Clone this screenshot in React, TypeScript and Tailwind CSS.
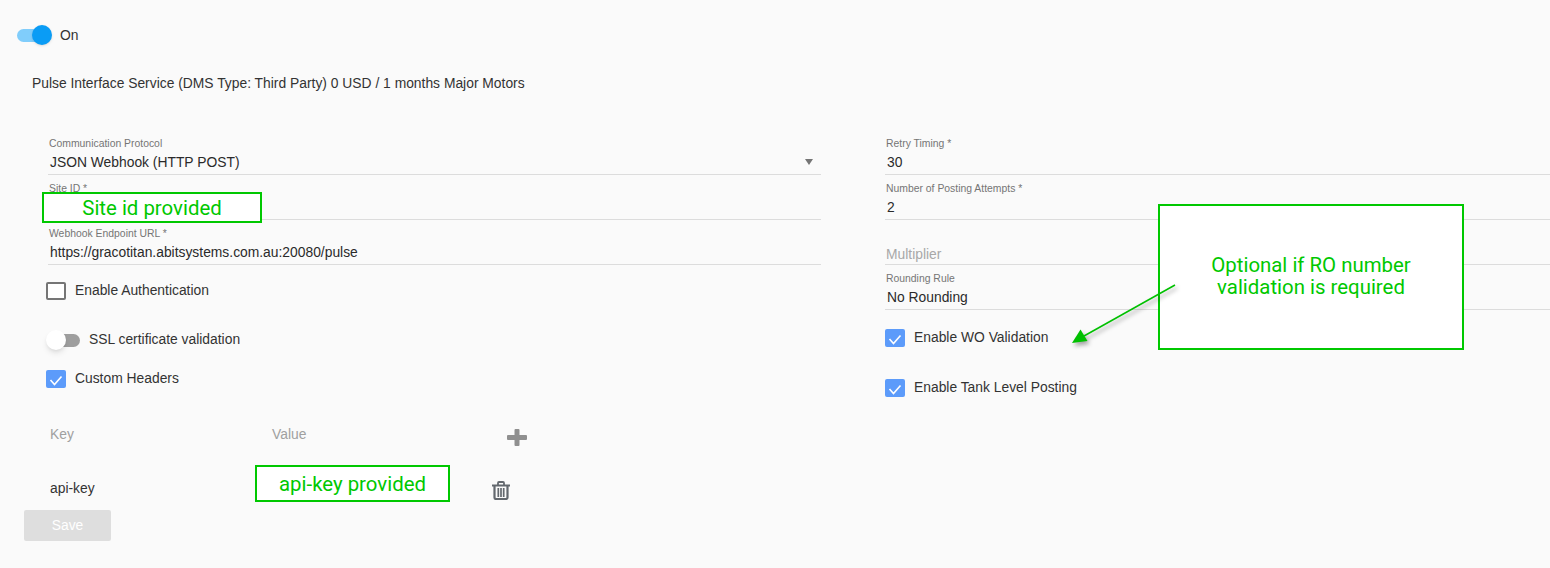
import React from 'react';

const Check: React.FC<{ className: string }> = ({ className }) => (
  <span className={`flex items-center justify-center rounded-[2px] bg-[#5c9bfa] shrink-0 ${className}`}>
    <svg viewBox="0 0 20 18" className="w-full h-full" fill="none" stroke="#ffffff" strokeWidth="1.6">
      <path d="M4.5 10 L8.5 14.5 L15.5 6.5" />
    </svg>
  </span>
);

const Field: React.FC<{ label: string; value?: string }> = ({ label, value }) => (
  <div className="h-[45px] pt-[8px] border-b border-[#dcdcdc]">
    <div className="h-[12px] text-[10.4px] leading-[12px] text-[#757575] pl-[1px]">{label}</div>
    <div className="h-[20px] mt-[2px] text-[13.85px] leading-[20px] text-[#2a2a2a] pl-[2px]">{value}</div>
  </div>
);

const Note: React.FC<{ className: string; children: React.ReactNode }> = ({ className, children }) => (
  <div className={`absolute flex items-center justify-center border-2 border-[#00c800] bg-white text-[20.4px] leading-[22px] text-[#00c800] font-['Roboto',sans-serif] text-center ${className}`}>
    {children}
  </div>
);

export default function App() {
  return (
    <div className="relative h-[568px] w-full overflow-hidden bg-[#fafafa] font-['Liberation_Sans',Arial,sans-serif] text-[13.85px] text-[#333333]">
      <div className="flex items-center h-[20px] mt-[25px] ml-[17px]">
        <div className="relative w-[35px] h-[20px] flex items-center">
          <div className="w-[32px] h-[13px] rounded-full bg-[#80cdfb]" />
          <div className="absolute left-[15px] top-0 w-[20px] h-[20px] rounded-full bg-[#0a9cf5] shadow-sm" />
        </div>
        <span className="ml-[8px] pt-[1px]">On</span>
      </div>

      <p className="mt-[30px] ml-[32px] h-[16px] leading-[16px] text-[#333333]">
        Pulse Interface Service (DMS Type: Third Party) 0 USD / 1 months Major Motors
      </p>

      <div className="flex mt-[39px]">
        <div className="w-[773px] ml-[48px]">
          <div className="relative">
            <Field label="Communication Protocol" value="JSON Webhook (HTTP POST)" />
            <span className="absolute right-[8px] top-[29px] w-0 h-0 border-x-[4.5px] border-x-transparent border-t-[6px] border-t-[#757575]" />
          </div>
          <Field label="Site ID *" />
          <Field label="Webhook Endpoint URL *" value="https://gracotitan.abitsystems.com.au:20080/pulse" />

          <div className="flex items-center h-[18px] mt-[17px] -ml-[2px]">
            <span className="w-[20px] h-[18px] rounded-[2px] border-2 border-[#757575] bg-white" />
            <span className="ml-[9px] pb-[2px]">Enable Authentication</span>
          </div>

          <div className="flex items-center h-[20px] mt-[30px] -ml-[2px]">
            <div className="relative w-[34px] h-[20px] flex items-center justify-end">
              <div className="w-[30px] h-[13px] rounded-full bg-[#9e9e9e]" />
              <div className="absolute left-0 top-0 w-[20px] h-[20px] rounded-full bg-white shadow-md" />
            </div>
            <span className="ml-[9px] pb-[2px]">SSL certificate validation</span>
          </div>

          <div className="flex items-center h-[18px] mt-[20px] -ml-[2px]">
            <Check className="w-[20px] h-[18px]" />
            <span className="ml-[9px] pb-[2px]">Custom Headers</span>
          </div>

          <div className="flex items-center h-[20px] mt-[37px] text-[#a0a0a0]">
            <span className="w-[222px] pl-[2px] pb-[2px]">Key</span>
            <span className="w-[237px] pl-[2px] pb-[2px]">Value</span>
            <svg viewBox="0 0 20 17" className="w-[20px] h-[17px] mt-[4px]" fill="#8f8f8f">
              <path d="M7.5 1 a1 1 0 0 1 1 -1 h3 a1 1 0 0 1 1 1 V6 H19 a1 1 0 0 1 1 1 v3 a1 1 0 0 1 -1 1 H12.5 V16 a1 1 0 0 1 -1 1 h-3 a1 1 0 0 1 -1 -1 V11 H1 a1 1 0 0 1 -1 -1 V7 a1 1 0 0 1 1 -1 H7.5 Z" />
            </svg>
          </div>

          <div className="flex items-center h-[20px] mt-[33px]">
            <span className="w-[444px] pl-[2px]">api-key</span>
            <svg viewBox="0 0 18 19" className="w-[18px] h-[19px] mt-[4px]" fill="none" stroke="#63686e">
              <path d="M0 4.5 H18" strokeWidth="2" />
              <path d="M6 4 V2 a1 1 0 0 1 1 -1 h4 a1 1 0 0 1 1 1 V4" strokeWidth="1.8" />
              <path d="M2.5 5 V16.5 a1.5 1.5 0 0 0 1.5 1.5 H14 a1.5 1.5 0 0 0 1.5 -1.5 V5" strokeWidth="2.2" />
              <path d="M6.3 7 V16 M9 7 V16 M11.7 7 V16" strokeWidth="1.7" />
            </svg>
          </div>
        </div>

        <div className="ml-[64px] flex-1">
          <Field label="Retry Timing *" value="30" />
          <Field label="Number of Posting Attempts *" value="2" />
          <div className="h-[45px] pt-[24px] border-b border-[#dcdcdc]">
            <div className="h-[20px] pl-[1px] leading-[20px] text-[#a8a8a8]">Multiplier</div>
          </div>
          <Field label="Rounding Rule" value="No Rounding" />

          <div className="flex items-center h-[18px] mt-[19px]">
            <Check className="w-[20px] h-[18px]" />
            <span className="ml-[9px] pb-[2px]">Enable WO Validation</span>
          </div>
          <div className="flex items-center h-[18px] mt-[32px]">
            <Check className="w-[20px] h-[18px]" />
            <span className="ml-[9px] pb-[2px]">Enable Tank Level Posting</span>
          </div>
        </div>
      </div>

      <button className="block mt-[12px] ml-[24px] w-[87px] h-[31px] rounded-[2px] bg-[#dedede] text-white pb-[1px]">
        Save
      </button>

      <Note className="left-[42px] top-[192px] w-[220px] h-[31px] pt-[1px]">Site id provided</Note>
      <Note className="left-[255px] top-[465px] w-[195px] h-[37px] pt-[1px]">api-key provided</Note>
      <Note className="left-[1158px] top-[204px] w-[306px] h-[146px] pb-[2px]">
        Optional if RO number
        <br />
        validation is required
      </Note>

      <svg className="absolute left-[1060px] top-[275px] w-[130px] h-[80px] drop-shadow-[2px_3px_2px_rgba(0,0,0,0.35)]" viewBox="0 0 130 80" fill="none">
        <path d="M115 10 L24 61" stroke="#00c000" strokeWidth="1.5" />
        <path d="M12 68 L20.5 54.5 L27.5 66 Z" fill="#00c000" />
      </svg>
    </div>
  );
}
